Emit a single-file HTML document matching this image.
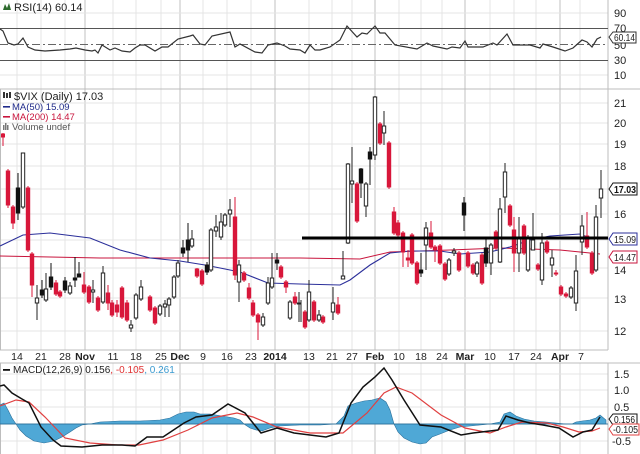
<!DOCTYPE html>
<html><head><meta charset="utf-8"><style>
html,body{margin:0;padding:0;background:#fff;}
svg{display:block;font-family:"Liberation Sans",sans-serif;}
</style></head><body>
<svg width="640" height="454" viewBox="0 0 640 454" xmlns="http://www.w3.org/2000/svg">
<rect width="640" height="454" fill="#fff"/>
<g stroke="#e4e4e4" stroke-width="1">
<path d="M17 0V350M41 0V350M65 0V350M113 0V350M136 0V350M161 0V350M203 0V350M227 0V350M251 0V350M309 0V350M332 0V350M352 0V350M399 0V350M421 0V350M442 0V350M490 0V350M514 0V350M536 0V350M580 0V350"/>
<path d="M17 363V454M41 363V454M65 363V454M113 363V454M136 363V454M161 363V454M203 363V454M227 363V454M251 363V454M309 363V454M332 363V454M352 363V454M399 363V454M421 363V454M442 363V454M490 363V454M514 363V454M536 363V454M580 363V454"/>
</g>
<g stroke="#cfcfcf" stroke-width="1.3">
<path d="M85 0V350M180 0V350M275 0V350M375 0V350M465 0V350M560 0V350"/>
<path d="M85 363V454M180 363V454M275 363V454M375 363V454M465 363V454M560 363V454"/>
</g>
<g stroke="#e4e4e4" stroke-width="1">
<path d="M0 13H608M0 75H608"/>
<path d="M0 103H608M0 123H608M0 144H608M0 166H608M0 189H608M0 214H608M0 240H608M0 268H608M0 298H608M0 331H608"/>
<path d="M0 374H608M0 390H608M0 407H608M0 441H608"/>
</g>
<path d="M0 424H608" stroke="#bbb"/>
<g stroke="#bdbdbd" fill="none">
<path d="M0 89H640"/>
<path d="M0 350H608"/>
<path d="M0 363H640"/>
<path d="M608 0V350M608 363V454"/>
<path d="M0.5 89V350M0.5 363V454"/>
</g>
<path d="M0 28.5H608M0 60.5H608" stroke="#555"/>
<path d="M0 44.5H608" stroke="#666" stroke-dasharray="8,3,2,3"/>
<polyline fill="none" stroke="#333" stroke-width="1.2" points="0,29 3,31 8,43 14,45 18,44 23,38 28,47 35,50 45,51 60,50 70,49 76,48 85,50 92,51 95,50 98,53 102,45 110,50 115,48 122,51 130,52 135,48 140,45 145,45 155,51 162,47 168,47 178,39 190,36 193,35 200,44 205,45 212,36 230,32 235,47 240,44 255,52 262,53 268,45 277,43 285,46 290,49 300,50 305,53 310,45 315,50 320,50 330,47 340,40 347,26 357,37 362,33 367,34 375,26 380,33 385,33 395,45 417,49 427,43 433,46 447,49 452,47 460,48 465,41 468,47 483,47 493,43 497,45 507,34 513,45 530,45 540,48 543,44 553,47 565,51 573,48 582,40 587,42 592,47 597,39 601,37"/>
<g font-size="11" fill="#222">
<text x="614" y="17">90</text><text x="614" y="32">70</text><text x="614" y="49">50</text><text x="614" y="64">30</text><text x="614" y="79">10</text>
</g>
<path d="M609 37 L613 32 H636 V43 H613 Z" fill="#fff" stroke="#333"/>
<text x="614" y="41" font-size="10" fill="#222" textLength="21" lengthAdjust="spacingAndGlyphs">60.14</text>
<path d="M3 10 L5 4 L7 8 L9 3 L11 10 Z" fill="#2e6b2e"/>
<text x="14" y="11" font-size="11" fill="#222">RSI(14) 60.14</text>
<g fill="#333"><rect x="3" y="92" width="2" height="6"/><rect x="6" y="93" width="2" height="5"/><rect x="9" y="92" width="2" height="6"/></g>
<text x="14" y="100" font-size="11" fill="#222">$VIX (Daily) 17.03</text>
<rect x="3" y="106" width="7" height="1.6" fill="#1f2a8a"/><text x="12" y="110" font-size="9.5" fill="#1f2a8a">MA(50) 15.09</text>
<rect x="3" y="116" width="7" height="1.6" fill="#c8143c"/><text x="12" y="120" font-size="9.5" fill="#c8143c">MA(200) 14.47</text>
<g fill="#777"><rect x="3" y="125" width="1.5" height="5"/><rect x="5" y="123" width="1.5" height="7"/><rect x="7" y="125" width="1.5" height="5"/></g>
<text x="12" y="130" font-size="9.5" fill="#555">Volume undef</text>
<polyline fill="none" stroke="#c8143c" stroke-width="1" points="0,256 100,258 200,258 300,258 360,259 390,252 450,250 500,248 560,250 600,254"/>
<polyline fill="none" stroke="#2b2f9a" stroke-width="1.1" points="0,246 23,235 50,233 90,238 120,250 150,258 180,261 205,265 240,272 268,283 300,284 340,285 350,280 370,265 390,253 410,251 440,251 460,254 490,252 510,247 530,240 550,236 580,234 590,238"/>
<g stroke="#d8173a" fill="#d8173a" stroke-width="1">
<path fill="none" d="M3 133V146M8 169V208M13 205V229M28 186V252M32 252V297M56 280V296M60 290V298M84 272V294M89 285V304M98 296V312M108 285V310M112 300V317M117 300V317M122 286V319M127 300V322M150 295V312M155 306V325M197 268V278M202 269V286M235 197V280M244 271V282M249 283V300M253 300V317M258 313V340M281 265V279M286 280V293M295 292V305M305 310V329M314 300V322M323 315V324M338 297V315M357 182V223M380 122V145M389 141V189M394 207V235M398 220V237M403 231V267M408 250V267M412 233V265M417 261V285M431 221V249M435 245V262M440 244V265M445 262V281M459 251V272M468 251V268M473 263V275M482 253V285M496 230V250M510 204V227M514 217V272M524 224V255M538 263V271M547 240V254M556 270V276M561 285V296M566 292V298M587 212V249M592 251V275"/>
<rect x="1.5" y="134" width="3" height="3"/>
<rect x="6.3" y="171" width="3.4" height="34"/><rect x="11.3" y="207" width="3.4" height="16"/><rect x="26.3" y="188" width="3.4" height="62"/><rect x="30.3" y="254" width="3.4" height="31"/><rect x="54.3" y="283" width="3.4" height="11"/><rect x="58.3" y="292" width="3.4" height="4"/><rect x="82.3" y="285" width="3.4" height="7"/><rect x="87.3" y="287" width="3.4" height="15"/><rect x="96.3" y="298" width="3.4" height="12"/><rect x="106.3" y="293" width="3.4" height="10"/><rect x="110.3" y="303" width="3.4" height="12"/><rect x="115.3" y="305" width="3.4" height="7"/><rect x="120.3" y="288" width="3.4" height="29"/><rect x="125.3" y="303" width="3.4" height="17"/><rect x="148.3" y="297" width="3.4" height="13"/><rect x="153.3" y="308" width="3.4" height="15"/><rect x="195.3" y="269" width="3.4" height="7"/><rect x="200.3" y="271" width="3.4" height="13"/><rect x="233.3" y="217" width="3.4" height="58"/><rect x="242.3" y="273" width="3.4" height="7"/><rect x="247.3" y="288" width="3.4" height="10"/><rect x="251.3" y="303" width="3.4" height="12"/><rect x="256.3" y="315" width="3.4" height="7"/><rect x="279.3" y="267" width="3.4" height="10"/><rect x="284.3" y="282" width="3.4" height="5"/><rect x="293.3" y="297" width="3.4" height="6"/><rect x="303.3" y="312" width="3.4" height="15"/><rect x="312.3" y="302" width="3.4" height="18"/><rect x="321.3" y="317" width="3.4" height="5"/><rect x="336.3" y="305" width="3.4" height="8"/><rect x="355.3" y="184" width="3.4" height="37"/><rect x="378.3" y="124" width="3.4" height="19"/><rect x="387.3" y="143" width="3.4" height="44"/><rect x="392.3" y="212" width="3.4" height="21"/><rect x="396.3" y="223" width="3.4" height="12"/><rect x="401.3" y="233" width="3.4" height="19"/><rect x="406.3" y="258" width="3.4" height="2"/><rect x="410.3" y="235" width="3.4" height="28"/><rect x="415.3" y="263" width="3.4" height="20"/><rect x="429.3" y="233" width="3.4" height="14"/><rect x="433.3" y="247" width="3.4" height="3"/><rect x="438.3" y="246" width="3.4" height="17"/><rect x="443.3" y="264" width="3.4" height="15"/><rect x="457.3" y="253" width="3.4" height="17"/><rect x="466.3" y="253" width="3.4" height="13"/><rect x="471.3" y="265" width="3.4" height="8"/><rect x="480.3" y="255" width="3.4" height="28"/><rect x="494.3" y="232" width="3.4" height="16"/><rect x="508.3" y="206" width="3.4" height="19"/><rect x="512.3" y="230" width="3.4" height="23"/><rect x="522.3" y="226" width="3.4" height="27"/><rect x="536.3" y="265" width="3.4" height="4"/><rect x="545.3" y="242" width="3.4" height="10"/><rect x="554.3" y="273" width="3.4" height="1"/><rect x="559.3" y="287" width="3.4" height="7"/><rect x="564.3" y="294" width="3.4" height="2"/><rect x="585.3" y="236" width="3.4" height="11"/><rect x="590.3" y="253" width="3.4" height="20"/>
</g>
<g stroke="#111" fill="#111" stroke-width="1">
<path fill="none" d="M18 173V220M42 280V298M51 263V290M65 277V293M75 257V287M79 262V277M183 240V257M188 223V262M207 262V275M277 253V270M361 168V198M370 147V185M421 253V277M464 197V231M486 237V267"/>
<rect x="16.3" y="188" width="3.4" height="25"/><rect x="40.3" y="290" width="3.4" height="5"/><rect x="49.3" y="277" width="3.4" height="10"/><rect x="63.3" y="281" width="3.4" height="9"/><rect x="73.3" y="278" width="3.4" height="2"/><rect x="77.3" y="274" width="3.4" height="3"/><rect x="181.3" y="248" width="3.4" height="5"/><rect x="186.3" y="240" width="3.4" height="10"/><rect x="205.3" y="265" width="3.4" height="7"/><rect x="275.3" y="260" width="3.4" height="3"/><rect x="359.3" y="169" width="3.4" height="14"/><rect x="368.3" y="152" width="3.4" height="7"/><rect x="419.3" y="270" width="3.4" height="3"/><rect x="462.3" y="203" width="3.4" height="12"/><rect x="484.3" y="248" width="3.4" height="15"/>
</g>
<g stroke="#222" fill="#fff" stroke-width="1">
<path fill="none" d="M23 153V209M37 285V320M46 273V302M70 282V295M93 280V303M103 266V304M131 320V332M136 293V320M141 280V301M160 304V316M165 300V317M169 297V317M174 275V299M178 260V278M192 230V248M211 228V272M216 215V237M221 213V240M225 213V227M230 199V227M239 260V302M263 313V327M268 277V305M272 253V289M290 300V320M299 292V322M301 300V322M309 280V322M319 310V322M333 287V320M343 251V279M348 163V244M352 147V203M366 182V217M375 96V160M384 111V145M426 222V270M449 258V276M454 248V256M477 261V277M491 243V275M500 198V263M505 163V213M519 217V272M528 235V272M533 213V247M542 233V285M552 250V277M571 286V299M576 255V311M582 215V255M596 205V272M601 170V218"/>
<rect x="21.3" y="153" width="3.4" height="54"/><rect x="35.3" y="298" width="3.4" height="5"/><rect x="44.3" y="289" width="3.4" height="11"/><rect x="68.3" y="286" width="3.4" height="7"/><rect x="91.3" y="290" width="3.4" height="2"/><rect x="101.3" y="273" width="3.4" height="29"/><rect x="129.3" y="325" width="3.4" height="3"/><rect x="134.3" y="295" width="3.4" height="23"/><rect x="139.3" y="287" width="3.4" height="12"/><rect x="158.3" y="306" width="3.4" height="8"/><rect x="163.3" y="304" width="3.4" height="3"/><rect x="167.3" y="299" width="3.4" height="6"/><rect x="172.3" y="277" width="3.4" height="20"/><rect x="176.3" y="263" width="3.4" height="13"/><rect x="190.3" y="239" width="3.4" height="7"/><rect x="209.3" y="230" width="3.4" height="40"/><rect x="214.3" y="227" width="3.4" height="4"/><rect x="219.3" y="222" width="3.4" height="15"/><rect x="223.3" y="215" width="3.4" height="10"/><rect x="228.3" y="210" width="3.4" height="4"/><rect x="237.3" y="265" width="3.4" height="17"/><rect x="261.3" y="317" width="3.4" height="8"/><rect x="266.3" y="283" width="3.4" height="20"/><rect x="270.3" y="278" width="3.4" height="9"/><rect x="288.3" y="302" width="3.4" height="16"/><rect x="297.3" y="303" width="3.4" height="1"/><rect x="307.3" y="292" width="3.4" height="28"/><rect x="317.3" y="315" width="3.4" height="5"/><rect x="331.3" y="303" width="3.4" height="9"/><rect x="341.3" y="276" width="3.4" height="3"/><rect x="346.3" y="164" width="3.4" height="79"/><rect x="350.3" y="181" width="3.4" height="3"/><rect x="364.3" y="184" width="3.4" height="22"/><rect x="373.3" y="97" width="3.4" height="58"/><rect x="382.3" y="126" width="3.4" height="7"/><rect x="424.3" y="228" width="3.4" height="17"/><rect x="447.3" y="260" width="3.4" height="14"/><rect x="452.3" y="251" width="3.4" height="2"/><rect x="475.3" y="263" width="3.4" height="11"/><rect x="489.3" y="245" width="3.4" height="18"/><rect x="498.3" y="209" width="3.4" height="53"/><rect x="503.3" y="172" width="3.4" height="25"/><rect x="517.3" y="237" width="3.4" height="16"/><rect x="526.3" y="237" width="3.4" height="33"/><rect x="531.3" y="240" width="3.4" height="10"/><rect x="540.3" y="243" width="3.4" height="37"/><rect x="550.3" y="258" width="3.4" height="7"/><rect x="569.3" y="288" width="3.4" height="9"/><rect x="574.3" y="271" width="3.4" height="32"/><rect x="580.3" y="226" width="3.4" height="16"/><rect x="594.3" y="217" width="3.4" height="53"/><rect x="599.3" y="189" width="3.4" height="9"/>
</g>
<path d="M302 238H608" stroke="#000" stroke-width="3"/>
<g font-size="11" fill="#222">
<text x="614" y="107">21</text><text x="614" y="127">20</text><text x="614" y="148">19</text><text x="614" y="170">18</text><text x="614" y="218">16</text><text x="614" y="274">14</text><text x="614" y="303">13</text><text x="614" y="335">12</text>
</g>
<path d="M609 189 L613 183 H637 V195 H613 Z" fill="#fff" stroke="#111"/>
<text x="614" y="193" font-size="10" font-weight="bold" fill="#111" textLength="22" lengthAdjust="spacingAndGlyphs">17.03</text>
<path d="M609 239 L613 233 H637 V245 H613 Z" fill="#fff" stroke="#2b2f9a"/>
<text x="614" y="243" font-size="10" fill="#222" textLength="22" lengthAdjust="spacingAndGlyphs">15.09</text>
<path d="M609 257 L613 251 H637 V263 H613 Z" fill="#fff" stroke="#c8143c"/>
<text x="614" y="261" font-size="10" fill="#222" textLength="22" lengthAdjust="spacingAndGlyphs">14.47</text>
<g font-size="10.5" fill="#222" text-anchor="middle">
<text x="17" y="360">14</text><text x="41" y="360">21</text><text x="65" y="360">28</text><text x="113" y="360">11</text><text x="136" y="360">18</text><text x="161" y="360">25</text><text x="203" y="360">9</text><text x="227" y="360">16</text><text x="251" y="360">23</text><text x="309" y="360">13</text><text x="332" y="360">21</text><text x="352" y="360">27</text><text x="399" y="360">10</text><text x="421" y="360">18</text><text x="442" y="360">24</text><text x="490" y="360">10</text><text x="514" y="360">17</text><text x="536" y="360">24</text><text x="581" y="360">7</text>
<g font-weight="bold"><text x="85" y="360">Nov</text><text x="180" y="360">Dec</text><text x="275" y="360">2014</text><text x="375" y="360">Feb</text><text x="465" y="360">Mar</text><text x="560" y="360">Apr</text></g>
</g>
<rect x="3" y="369" width="7" height="1.8" fill="#111"/>
<text x="13" y="373" font-size="10" fill="#222">MACD(12,26,9) 0.156<tspan fill="#e03030">, -0.105</tspan><tspan fill="#3a9ad0">, 0.261</tspan></text>
<polygon fill="#4fa8d6" stroke="#2a6f9a" stroke-width="0.6" points="0,424 0,405 4,403 8,410 12,418 16,424 20,430 26,436 34,441 44,443 54,441 62,437 70,432 76,428 82,425 90,424 100,422 120,421 140,421 160,420 170,418 178,414 186,412 194,412 200,414 210,414 222,416 234,418 240,420 244,424 250,428 256,430 262,431 270,428 280,426 300,425 320,425 336,424 344,416 348,406 356,403 364,401 372,400 380,398 386,402 390,410 394,424 398,432 404,438 412,442 420,444 426,443 432,437 440,434 450,430 460,427 470,426 490,424 500,422 504,414 510,412 516,416 524,419 534,421 546,422 556,423 566,424 572,424 576,422 582,421 590,420 596,418 600,415 606,420 606,424"/>
<path d="M0 424H608" stroke="#2a6f9a" stroke-width="0.8"/>
<polyline fill="none" stroke="#e04040" stroke-width="1.2" points="0,406 16,400 29,402 45,417 65,438 90,443 118,445 139,445 163,440 188,430 212,418 237,413 253,417 277,427 310,433 343,433 367,413 384,393 396,387 412,393 441,415 465,428 490,433 506,427 522,422 547,423 563,427 579,432 592,431 600,428"/>
<polyline fill="none" stroke="#111" stroke-width="1.5" points="0,386 4,385 12,393 22,399 29,403 41,427 53,440 61,446 82,447 102,445 122,445 135,446 147,437 163,437 184,423 196,417 212,415 228,404 245,413 261,433 277,428 294,433 310,435 326,437 339,433 351,403 363,387 375,377 384,368 392,380 404,400 420,425 441,427 461,435 473,433 498,430 506,416 518,420 530,423 543,425 559,428 573,437 583,432 592,430 600,417"/>
<g font-size="11" fill="#222">
<text x="614" y="378">1.5</text><text x="614" y="394">1.0</text><text x="614" y="411">0.5</text><text x="612" y="445">-0.5</text>
</g>
<path d="M609 419 L613 414 H637 V425 H613 Z" fill="#fff" stroke="#111"/>
<text x="614" y="423" font-size="10" fill="#111" textLength="21" lengthAdjust="spacingAndGlyphs">0.156</text>
<path d="M609 429 L613 424 H639 V435 H613 Z" fill="#fff" stroke="#e04040"/>
<text x="613" y="433" font-size="10" fill="#222" textLength="25" lengthAdjust="spacingAndGlyphs">-0.105</text>
</svg>
</body></html>
